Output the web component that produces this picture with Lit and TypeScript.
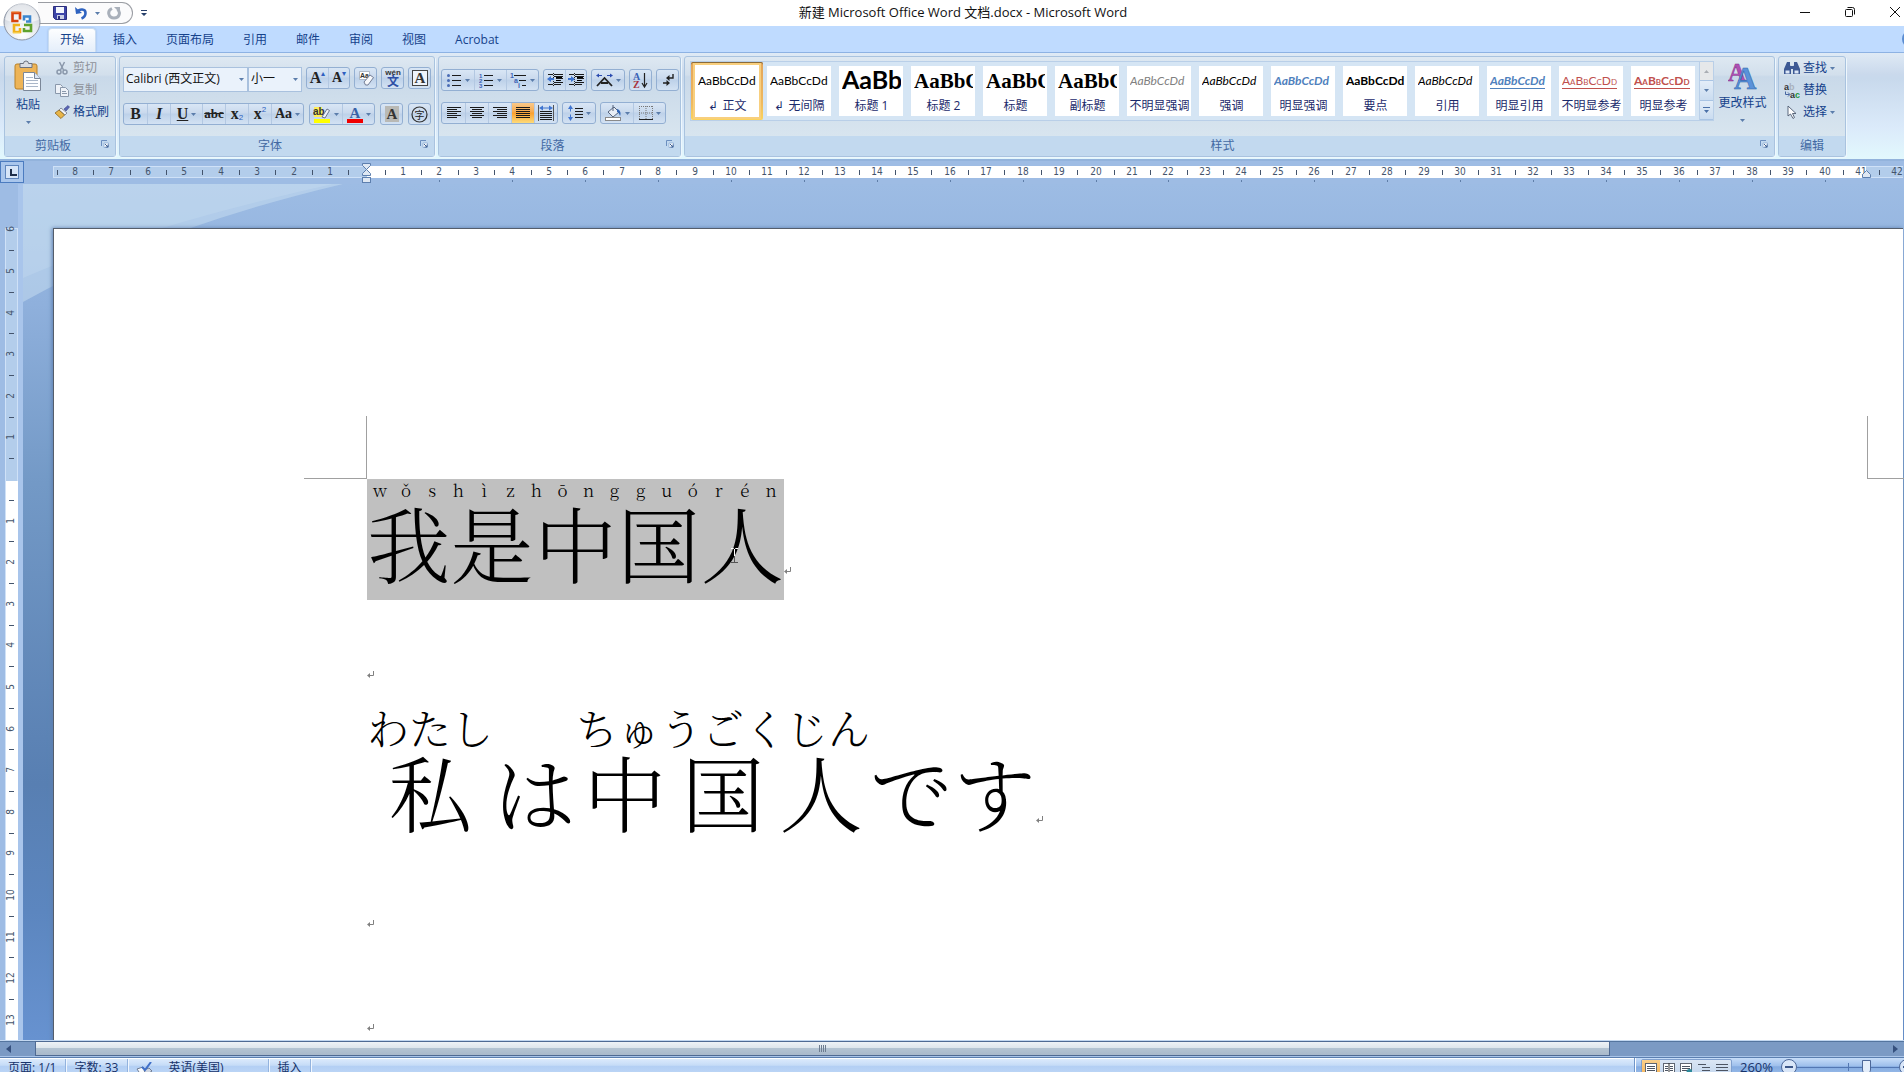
import { LitElement, html, svg, css, nothing, TemplateResult } from "lit";
import { customElement, state } from "lit/decorators.js";

type Glyph = TemplateResult<2>;

const icon = (w: number, h: number, body: Glyph) =>
  html`<svg class="ico" width=${w} height=${h} viewBox="0 0 ${w} ${h}" aria-hidden="true">${body}</svg>`;

const arrow = () => icon(5, 3, svg`<path d="M0 0h5L2.500 3z" fill="#5b7dab"/>`);

const rows = (list: number[][], color = "#1a1a1a"): Glyph =>
  svg`${list.map(([x, y, w]) => svg`<rect x=${x} y=${y} width=${w} height="1" fill=${color}/>`)}`;

const orb = () => icon(40, 40, svg`
  <defs>
    <radialGradient id="o" cx=".5" cy=".85" r=".9"><stop offset="0" stop-color="#fff"/><stop offset=".5" stop-color="#e4e8ee"/><stop offset="1" stop-color="#b7bec9"/></radialGradient>
  </defs>
  <circle cx="20" cy="20" r="18" fill="url(#o)" stroke="#8c95a5"/>
  <path d="M3.500 18a16.500 16.500 0 0 1 33 0c-10 4-23 4-33 0z" fill="#fff" opacity=".55"/>
  <g fill="none" stroke-width="2.600">
    <path d="M18 17.500v-6.500h-7.500v8h6" stroke="#d8430f"/>
    <path d="M22 18.500v-4h6v5h-4" stroke="#3b86cf"/>
    <path d="M18 23h-6v7h6v-4" stroke="#f0b21c"/>
    <path d="M22 23h7v6h-7v-3" stroke="#5fa22c"/>
  </g>
  <path d="M9.500 10h8" stroke="#f58a3a"/><path d="M11 31h7" stroke="#fbe27a"/>`);

const save = () => icon(14, 14, svg`<path d="M.5.5h13v13h-11l-2-2z" fill="#3d45a8" stroke="#2c2f7d"/><path d="M3 1h8v6H3z" fill="#f4f7fd"/><path d="M4 9h7v4H4z" fill="#c9cfe4"/><path d="M5 10h2v3H5z" fill="#2c2f7d"/>`);
const undo = () => icon(14, 14, svg`<path d="M1 1l1 7 6-1z" fill="#2f63c0"/><path d="M3 6C5.500 2.500 11.500 2.500 11.500 7c0 2.500-1.500 4.500-4 5.500" fill="none" stroke="#2f63c0" stroke-width="2.600"/>`);
const redo = () => icon(14, 14, svg`<path d="M5 2.500C-.5 5 1.500 12 7 12s7-6 3.500-8.500" fill="none" stroke="#a9b0ba" stroke-width="3"/><path d="M7 1h6v6z" fill="#a9b0ba"/>`);

const paste = () => icon(28, 32, svg`
  <rect x="1" y="4" width="22" height="25" rx="2" fill="#edb457" stroke="#b98128"/>
  <path d="M6 3.500h3.500a2.500 2.500 0 0 1 5 0H18v4H6z" fill="#d9dde3" stroke="#6b7280"/>
  <path d="M9.500 12.500h11l6 6v12h-17z" fill="#fdfeff" stroke="#7b8798"/>
  <path d="M20.500 12.500v6h6" fill="#dbe6f5" stroke="#7b8798"/>
  ${rows([[12, 17, 7], [12, 20, 12], [12, 23, 12], [12, 26, 12]], "#a9b6c8")}`);
const cut = () => icon(14, 14, svg`<path d="M4.500 1l4 8M9.500 1l-4 8" stroke="#8a98ab" stroke-width="1.500"/><g fill="none" stroke="#8a98ab" stroke-width="1.500"><circle cx="4" cy="11" r="2"/><circle cx="10" cy="11" r="2"/></g>`);
const copy = () => icon(14, 13, svg`<g fill="#eef2f8" stroke="#8a98ab"><path d="M.5.5h5l2 2v7h-7z"/><path d="M5.500 3.500h5l3 3v6h-8z"/></g>${rows([[7, 7, 4], [7, 9, 5]], "#8a98ab")}`);
const brush = () => icon(16, 14, svg`<path d="M10 4l4-3.500 1.500 1.500L12 6z" fill="#5a66b5" stroke="#3a4386" stroke-width=".6"/><path d="M7 3l6 5-2 2-6-5z" fill="#f2f4f8" stroke="#6f7686" stroke-width=".8"/><path d="M5 5l5.500 5L7 13.500 1 8z" fill="#e8b548" stroke="#8a6420" stroke-width=".8"/>`);
const launcher = () => icon(8, 8, svg`<path d="M.5 6V.5H6" fill="none" stroke="#6c8fbf"/><path d="M3 3h4.500v4.500H3z" fill="#fff" stroke="#8ba9d0" stroke-width=".8"/><path d="M4 4l3 3M7 4.500V7H4.500" stroke="#3f6296" fill="none"/>`);

const eraser = () => icon(16, 16, svg`<path d="M1.500 1.500h10v8h-10z" fill="#fff" stroke="#9aa3b3" stroke-width=".7"/><text x="2" y="8" font-size="7" font-weight="700" fill="#333">Aa</text><path d="M6 12l6-7 3.500 2.500L10 15H7.500z" fill="#f6f8fb" stroke="#66718a" stroke-width=".9"/>`);
const wen = () => icon(18, 18, svg`<text x="9" y="6" font-size="8" text-anchor="middle" font-weight="700" fill="#333">wén</text><text x="9" y="17" font-size="12" text-anchor="middle" font-weight="700" fill="#2e4fa5">文</text>`);
const boxA = () => icon(16, 16, svg`<rect x=".5" y=".5" width="15" height="15" fill="#eef3fa" stroke="#444"/><text class="sf" x="8" y="13" font-size="15" text-anchor="middle" font-weight="700" fill="#333">A</text>`);
const shadeA = () => icon(14, 16, svg`<rect width="14" height="16" fill="#b9b9b5"/><text class="sf" x="7" y="13" font-size="15" text-anchor="middle" font-weight="700" fill="#333">A</text>`);
const ringZi = () => icon(17, 17, svg`<circle cx="8.500" cy="8.500" r="7.500" fill="none" stroke="#333" stroke-width="1.200"/><text x="8.500" y="12.500" font-size="10" text-anchor="middle" fill="#222">字</text>`);
const highlight = () => icon(18, 17, svg`<rect x="1" y="1" width="8" height="10" fill="#ffee55"/><text x="0" y="9" font-size="10" font-weight="700" fill="#333">ab</text><path d="M9 11l5-8 2.500 1.500L12 12z" fill="#eef2f8" stroke="#6a7690"/><rect x="1" y="13" width="16" height="4" fill="#ff0"/>`);
const fontColor = () => icon(16, 17, svg`<text class="sf" x="8" y="12" font-size="15" text-anchor="middle" font-weight="700" fill="#3a62a7">A</text><rect y="13" width="16" height="4" fill="#f00000"/>`);

const bullets = () => icon(15, 15, svg`${rows([[5, 2, 9], [5, 7, 9], [5, 12, 9]])}<g fill="#4a6cb5"><circle cx="1.500" cy="2.500" r="1.500"/><circle cx="1.500" cy="7.500" r="1.500"/><circle cx="1.500" cy="12.500" r="1.500"/></g>`);
const numbers = () => icon(15, 15, svg`${rows([[5, 2, 9], [5, 7, 9], [5, 12, 9]])}<g font-size="6" font-weight="700" fill="#3b62b5"><text y="5">1</text><text y="10">2</text><text y="15">3</text></g>`);
const levels = () => icon(17, 15, svg`${rows([[4, 2, 12], [9, 7, 7], [12, 12, 4]])}<g font-size="7" font-weight="700" fill="#3b62b5"><text y="5">1</text><text x="4" y="10">a</text><text x="8" y="15">i</text></g>`);
const indent = (right: boolean) => icon(16, 14, svg`${rows([[1, 1, 5], [7, 1, 9], [7, 3, 9], [9, 5, 7], [9, 7, 5], [7, 9, 9], [1, 11, 5], [7, 11, 7]])}<path d="M9 4h6v1H9zM9 7h4v1H9z"/><path d="M6.500 0v14" stroke="#222" stroke-dasharray="1 1"/><path d=${right ? "M0 5h3V3l4 3-4 3V7H0z" : "M7 5H4V3L0 6l4 3V7h3z"} fill="#3f74cf"/>`);
const asian = () => icon(17, 15, svg`<path d="M1 13l7.500-8L16 13M5 10h7" stroke="#222" stroke-width="1.800" fill="none"/><path d="M0 2.500l3-2v4zM17 2.500l-3-2v4z" fill="#2b4bb0"/><path d="M2 2.500h4M11 2.500h4" stroke="#2b4bb0"/>`);
const sortAz = () => icon(15, 17, svg`<g class="sf" font-size="10" font-weight="700"><text y="8" fill="#3b62b5">A</text><text y="16" fill="#a8333d">Z</text></g><path d="M11.500 1v13M9 11l2.500 4 2.500-4" fill="none" stroke="#222" stroke-width="1.200"/>`);
const marks = () => icon(12, 14, svg`<path d="M11 1v4H5M1 10h6" fill="none" stroke="#222" stroke-width="1.400"/><path d="M7.500 2v6L4 5zM4.500 7v6L8 10z" fill="#222"/>`);
const align = (kind: string) => {
  const at = (w: number) => (kind === "r" ? 14 - w : kind === "c" ? (14 - w) / 2 : 0);
  return icon(14, 12, rows([14, 10, 14, 10, 14, 10].map((w, i) => [at(kind === "j" ? 14 : w), i * 2, kind === "j" ? 14 : w])));
};
const spread = () => icon(16, 16, svg`${rows([[2, 6, 12], [2, 8, 12], [2, 10, 12], [2, 12, 12], [2, 14, 12]])}<path d="M.5 0v16M15.500 0v16" stroke="#555"/><path d="M1 3l4-2.500v5zM15 3l-4-2.500v5z" fill="#3f74cf"/><path d="M3 3h10" stroke="#3f74cf"/>`);
const lineGap = () => icon(15, 16, svg`${rows([[7, 3, 8], [7, 6, 8], [7, 9, 8], [7, 12, 8]])}<path d="M2.500 0L5 4H0zM2.500 16L5 12H0z" fill="#3f74cf"/><path d="M2.500 3v3.500M2.500 9.500V13" stroke="#3f74cf"/>`);
const bucket = () => icon(17, 16, svg`<path d="M3 7l6-5 5 5-6 5z" fill="#e9eef6" stroke="#55637c"/><path d="M8 0v6" stroke="#55637c"/><path d="M12 4c4 1 4 5 3 7-1-3-2-4-3-4z" fill="#2f63b5"/><rect x=".5" y="12.500" width="15" height="3" fill="#fff" stroke="#8a8a8a"/>`);
const borders = () => icon(14, 14, svg`<path d="M.5 0v13M7 0v13M13.500 0v13M0 .5h14M0 7h14" stroke="#777" stroke-dasharray="1 1"/><path d="M0 13.500h14" stroke="#222"/>`);

const changeStyles = () => icon(30, 28, svg`<g class="sf" font-weight="700"><text x="0" y="19" font-size="25" fill="#b04fb3" stroke="#7d2f86" stroke-width=".4">A</text><text x="6" y="27" font-size="31" fill="#5a92da" stroke="#2c5fa6" stroke-width=".5">A</text></g>`);
const find = () => icon(16, 13, svg`<g fill="#3c5894"><path d="M3 0h3v3l1 3v6H0V7z"/><path d="M10 0h3l3 7v5H9V6l1-3z"/><path d="M6 4h4v3H6z"/></g><path d="M1.500 8.500h4v3h-4zM10.500 8.500h4v3h-4z" fill="#dbe6f6"/>`);
const replace = () => icon(16, 15, svg`<g font-size="9" font-weight="700"><text y="7" fill="#333">a</text><text x="5" y="7" fill="#a9b1bd">b</text><text x="6" y="15" fill="#333">a</text><text x="11" y="15" fill="#22943c">c</text></g><path d="M1.500 8.500v3h4M4 9.500l2 2-2 2" fill="none" stroke="#4664a0"/>`);
const pointer = () => icon(10, 14, svg`<path d="M1 1v10l2.500-2L6 13.500l1.500-1L5.500 8.500H9z" fill="#fff" stroke="#4d5a70" stroke-width=".9"/>`);

const proof = () => icon(17, 13, svg`<path d="M1 7l6-2 3 4-5 4z" fill="#f8fafd" stroke="#6f7c93"/><path d="M8 8l5-2 3 3-6 4z" fill="#cdd5e2" stroke="#6f7c93"/><path d="M6 5l3 3 6-8" fill="none" stroke="#3f6fc8" stroke-width="2"/>`);
const viewIcon = (k: number) => icon(12, 11, svg`
  ${k < 3 ? svg`<rect x=".5" y=".5" width="11" height="10" fill="#fff" stroke="#5f6672"/>` : nothing}
  ${k === 1 ? svg`<path d="M6 0v11" stroke="#333"/>` : nothing}
  ${rows(k === 3 ? [[0, 1, 8], [4, 4, 8], [4, 7, 8], [6, 10, 6]] : k === 4 ? [[0, 1, 12], [0, 4, 12], [0, 7, 12], [0, 10, 12]] : k === 1 ? [[2, 3, 3], [2, 5, 3], [2, 7, 3], [7, 3, 3], [7, 5, 3], [7, 7, 3]] : [[2, 3, 8], [2, 5, 8], [2, 7, 8]], "#4d5563")}
  ${k === 2 ? svg`<circle cx="9.500" cy="9" r="3" fill="#2d8a9b"/>` : nothing}`);

const returnMark = () => html`<svg class="mark" width="8" height="8" viewBox="0 0 8 8" aria-hidden="true"><path d="M6.500 0v4.500H2" fill="none" stroke="#808080"/><path d="M3 2v5L0 4.500z" fill="#808080"/></svg>`;

const UNIT_X = 36.45;
const UNIT_Y = 41.6;

@customElement("office-ruler")
class OfficeRuler extends LitElement {
  static styles = css`
    :host { display: block; overflow: hidden; height: 23px; background: #9ebce4; }
    svg { display: block; }
    text { font: 10px "Liberation Sans Narrow", "DejaVu Sans Condensed", sans-serif; fill: #44546c; text-anchor: middle; }
  `;
  render() {
    const zero = 366.5;
    const marks = Array.from({ length: 51 }, (_, i) => i - 8);
    return html`<svg width="1903" height="23" aria-hidden="true">
      <rect x="53.500" y="5.500" width="1860" height="11" fill="#b3cdeb" stroke="#cfe1f7"/>
      <rect x="367" y="5" width="1499" height="12" fill="#fff"/>
      ${marks.map((n) => {
        const x = Math.round(zero + n * UNIT_X);
        const half = Math.round(zero + (n - 0.5) * UNIT_X);
        return svg`<rect x=${half} y="9" width="1" height="5" fill="#44546c"/>
          ${n ? svg`<text x=${x} y="14">${Math.abs(n)}</text>` : nothing}
          ${n > 0 && n < 41 && n % 2 === 0 ? svg`<rect x=${x} y="19" width="1" height="2" fill="#5f7ea8"/>` : nothing}`;
      })}
      <rect x=".5" y=".5" width="23" height="21" fill="#a9c6ec" stroke="#4c7cc0"/>
      <rect x="5.500" y="4.500" width="13" height="13" fill="#d6e5f8" stroke="#5f86bd"/>
      <path d="M11 8v6h6" fill="none" stroke="#1f2f4b" stroke-width="2"/>
      <g fill="#dfe8f3" stroke="#5d7fae">
        <path d="M362.500 2.500h8v2l-4 4 4 4v2h-8v-2l4-4-4-4z"/>
        <rect x="362.500" y="16.500" width="8" height="5"/>
        <path d="M1862.500 16.500v-3l4-4 4 4v3z"/>
      </g>
    </svg>`;
  }
}

@customElement("office-side-ruler")
class OfficeSideRuler extends LitElement {
  static styles = css`
    :host { display: block; overflow: hidden; width: 23px; background: #9ebce4; }
    svg { display: block; }
    text { font: 10px "Liberation Sans Narrow", "DejaVu Sans Condensed", sans-serif; fill: #44546c; text-anchor: middle; }
  `;
  render() {
    const zero = 295;
    const marks = Array.from({ length: 21 }, (_, i) => i - 6);
    return html`<svg width="23" height="900" aria-hidden="true">
      <rect x="18" width="5" height="900" fill="#a9c5eb"/>
      <rect x="5.500" y="44.500" width="12" height="900" fill="#b3cdeb" stroke="#cfe1f7"/>
      <rect x="6" y="297" width="12" height="700" fill="#fff"/>
      ${marks.map((n) => {
        const y = Math.round(zero + n * UNIT_Y);
        const half = Math.round(zero + (n + 0.5) * UNIT_Y);
        return svg`<rect x="9" y=${half} width="5" height="1" fill="#44546c"/>
          ${n ? svg`<text transform="translate(14 ${y}) rotate(-90)">${Math.abs(n)}</text>` : nothing}`;
      })}
    </svg>`;
  }
}

interface StyleItem { label: string; sample: string; cls: string; mark?: boolean; }

const STYLES: StyleItem[] = [
  { label: "正文", sample: "AaBbCcDd", cls: "", mark: true },
  { label: "无间隔", sample: "AaBbCcDd", cls: "", mark: true },
  { label: "标题 1", sample: "AaBb", cls: "h1" },
  { label: "标题 2", sample: "AaBbC", cls: "h2" },
  { label: "标题", sample: "AaBbC", cls: "h2" },
  { label: "副标题", sample: "AaBbC", cls: "h2" },
  { label: "不明显强调", sample: "AaBbCcDd", cls: "it gray" },
  { label: "强调", sample: "AaBbCcDd", cls: "it" },
  { label: "明显强调", sample: "AaBbCcDd", cls: "it bold blue" },
  { label: "要点", sample: "AaBbCcDd", cls: "bold" },
  { label: "引用", sample: "AaBbCcDd", cls: "it" },
  { label: "明显引用", sample: "AaBbCcDd", cls: "it bold blue under" },
  { label: "不明显参考", sample: "AaBbCcDd", cls: "caps red under" },
  { label: "明显参考", sample: "AaBbCcDd", cls: "caps bold red under" },
];

@customElement("app-root")
class AppRoot extends LitElement {
  @state() private tab = "开始";
  @state() private style_ = "正文";

  static styles = css`
    :host {
      display: flex; flex-direction: column; height: 100vh; overflow: hidden;
      font: 12px/16px "Open Sans", "Noto Sans CJK SC", sans-serif; color: #15428b; background: #fff;
    }
    * { box-sizing: border-box; }
    button, select { font: inherit; color: inherit; background: none; border: 0; padding: 0; margin: 0; }
    .ico { display: block; flex: none; }
    .ico text { font-family: "Liberation Sans", "Noto Sans CJK SC", sans-serif; }
    .ico .sf, .ico .sf text { font-family: "Liberation Serif", serif; }

    .title { display: grid; grid-template-columns: 1fr auto 1fr; height: 26px; flex: none; background: #fff; color: #111; }
    .quick { display: flex; align-items: center; height: 22px; margin: 2px 0 0 38px; }
    .pill { display: flex; align-items: center; gap: 7px; height: 22px; width: 95px; padding: 0 9px 0 15px; border: 1px solid #9a9da3; border-left: 0; border-radius: 0 11px 11px 0; background: #fbfbfc; }
    .pill button { display: flex; }
    .more { margin-left: 8px; }
    .name { margin: 0 0 0 22px; font: 13px/16px "Open Sans", "Noto Sans CJK SC", sans-serif; padding-top: 4px; }
    .win { display: flex; justify-content: flex-end; }
    .win button { width: 45px; display: grid; place-items: center; padding-bottom: 2px; }
    .win button:last-child { width: 32px; padding-left: 13px; }
    .orb { position: absolute; left: 2px; top: 2px; z-index: 3; }

    .tabs { display: flex; gap: 5px; height: 26px; flex: none; padding: 2px 0 0 48px; background: #bfdbff; overflow: hidden; }
    .tabs button { height: 24px; border: 1px solid transparent; border-bottom: 0; padding: 0 11px 1px; }
    .tabs .on { border-color: #c9dcf1; border-radius: 4px 4px 0 0; background: linear-gradient(#fdfeff, #e4eefa); box-shadow: 0 0 2px #8fb0dc; }
    .tabs .help { margin: 2px -16px 0 auto; width: 18px; height: 18px; padding: 0; border: 2px solid #5a8cd0; border-radius: 9px; }

    .ribbon { display: flex; gap: 3px; flex: none; height: 109px; padding: 3px 2px 2px 4px; border-top: 1px solid #8db2e3; border-bottom: 2px solid #93b3dc; background: linear-gradient(#dfeaf5, #cad9ec 20%, #c8d9ec 24%, #dbeafa 70%, #e2f8fd); }
    .group { display: flex; flex-direction: column; border: 1px solid #a9c3df; border-radius: 3px; background: linear-gradient(#dee8f2, #d2dfec 18%, #c9d9e9 20%, #d8e5ef 80%); box-shadow: 1px 1px 0 #eef7fd; }
    .gbody { flex: 1; display: flex; }
    .glabel { display: flex; flex: none; height: 20px; background: #c2d9ef; color: #4369a3; align-items: center; }
    .glabel span { flex: 1; text-align: center; }
    .glabel button { width: 14px; align-self: flex-start; padding-top: 4px; }
    .clip { width: 112px; }
    .font { width: 316px; }
    .para { width: 243px; }
    .edit { width: 68px; }
    .big { display: flex; flex-direction: column; align-items: center; }
    .clip .big { width: 46px; padding: 3px 0 0; gap: 5px; }
    .clip .big .ico:last-child, .styles .big .ico:last-child { margin-top: 3px; }
    .list { display: flex; flex-direction: column; }
    .list button { display: flex; align-items: center; gap: 3px; height: 22px; padding-left: 3px; }
    .list button:disabled { color: #8d9199; }
    .list .ico:first-child { width: 16px; }

    .stack { padding: 10px 3px 0 3px; flex: 1; display: flex; flex-direction: column; gap: 11px; }
    .font .line { justify-content: space-between; }
    .para .stack { padding: 12px 4px 0 2px; }
    .line { display: flex; gap: 4px; height: 25px; }
    .para .line { height: 22px; }
    .combos { display: flex; }
    .combo { display: grid; align-items: center; height: 25px; }
    .combo > * { grid-area: 1 / 1; }
    .combo select { appearance: none; height: 25px; width: 100%; padding: 0 2px 2px; border: 1px solid #a9c1de; background: #eaf2fb; color: #111; }
    .combo .ico { justify-self: end; margin-right: 4px; pointer-events: none; }
    .combo.face { width: 125px; }
    .combo.size { width: 54px; }
    .set { display: flex; flex: none; height: 22px; border: 1px solid #93afd2; border-radius: 3px; background: linear-gradient(#d9e6f5, #c9d9ed 45%, #bdd1e9 50%, #d3e2f3); }
    .set button { display: flex; align-items: center; justify-content: center; gap: 3px; flex: none; width: 21px; border-left: 1px solid #b3c8e2; color: #222; }
    .set button:first-child { border-left: 0; }
    .set.roomy button { width: 23px; }
    .set .wide, .set.roomy .wide { width: 32px; }
    .set .on { background: linear-gradient(#f9c98a, #f7a94b 45%, #fb9f2d 50%, #fddb7a); }
    .ch { font: bold 16px/20px "Liberation Serif", serif; color: #222; }
    .ch.i { font-style: italic; }
    .ch.u { text-decoration: underline; }
    .ch.s { font-size: 13px; text-decoration: line-through; }
    .ch.m { font-size: 14px; }
    .tiny { font: 8px/8px "Liberation Sans", sans-serif; color: #2e5fc0; align-self: flex-end; padding-bottom: 2px; margin-left: -3px; }
    .tiny.up { align-self: flex-start; padding-top: 2px; }

    .styles .gbody { padding: 4px 3px 0 5px; }
    .gallery { display: flex; height: 60px; border: 1px solid #b9cfe8; background: #d5e5f4; }
    .cards { display: flex; }
    .card { width: 72px; height: 58px; padding: 4px; display: flex; flex-direction: column; align-items: center; color: #1b2a6b; }
    .card .face { display: flex; flex-direction: column; width: 64px; height: 50px; padding: 0 2px 0 3px; background: #fff; overflow: hidden; }
    .card.on { padding: 1px; background: linear-gradient(#e3a55b, #efb95f 70%, #fbd45c); box-shadow: inset 0 1px 0 #8a6a3a; border-radius: 2px; }
    .card.on .face { width: 68px; height: 56px; border: 2px solid #f8cf7e; padding: 1px 2px 0 3px; }
    .sample { display: block; height: 31px; font: 12px/30px Lato, sans-serif; color: #000; overflow: hidden; white-space: nowrap; text-align: left; }
    .sample.h1 { font: bold 25px/26px Lato, sans-serif; }
    .sample.h2 { font: bold 21px/30px "Liberation Serif", serif; }
    .sample.it { font-style: italic; }
    .sample.bold { font-weight: 700; }
    .sample.gray { color: #808080; }
    .sample.blue { color: #4f81bd; }
    .sample.red { color: #c0504d; }
    .sample.caps { font-variant: small-caps; }
    .under span { border-bottom: 1px solid currentColor; }
    .cap { display: flex; justify-content: center; gap: 4px; white-space: nowrap; line-height: 17px; margin: 0 -3px; }
    .spin { display: flex; flex-direction: column; width: 14px; border-left: 1px solid #b9cfe8; }
    .spin button { flex: 1; display: grid; place-items: center; border-bottom: 1px solid #a9c4e4; background: linear-gradient(#e3edf8, #cadcf0); }
    .spin button:disabled { background: #e6e8ea; }
    .styles .big { width: 57px; padding-top: 1px; gap: 5px; }
    .edit .list { padding-left: 2px; }

    .work { flex: 1; min-height: 0; display: flex; }
    .desk { position: relative; flex: 1; min-width: 0; overflow: hidden; padding: 44px 1px 0 30px; background: linear-gradient(#9dbce4, #8fb0dc 14%, #7399c6 35%, #587fb2 70%, #5c86bf 85%, #6792d0); }
    .sky { position: absolute; left: 0; top: 0; }
    .page { position: relative; height: 1000px; background: #fff; border: 1px solid #555e6b; border-right: 0; padding: 250px 0 0 313px; box-shadow: -1px 0 4px #5f80b0; }
    .page p { display: flex; align-items: flex-end; margin: 0; height: 104px; padding-bottom: 25px; color: #000; }
    .page p.first { height: 121px; }
    .page p.second { height: 145px; }
    .corner { position: absolute; width: 63px; height: 63px; top: 187px; border: 0 solid #a0a0a0; border-bottom-width: 1px; }
    .corner.l { left: 250px; border-right-width: 1px; }
    .corner.r { left: 1813px; border-left-width: 1px; }
    .mark { flex: none; display: block; }
    .ruby { display: flex; flex-direction: column; font-family: "Noto Serif CJK SC", "Noto Sans CJK SC", serif; font-weight: 300; }
    .ruby.jp { font-family: "Noto Serif CJK JP", "Noto Sans CJK JP", serif; }
    .rt, .rb { display: flex; justify-content: space-around; }
    .rb { font-size: 83px; line-height: 84px; }
    .sel { background: #c0c0c0; height: 121px; margin-bottom: -25px; width: 417px; }
    .sel .rt { height: 20px; font-size: 17px; line-height: 22px; }
    .sel .rt span { width: 26px; text-align: center; }
    .jp { margin-bottom: -25px; height: 144px; }
    .jp .rt { height: 43px; font-size: 42px; line-height: 45px; }
    .jp.plain { padding-top: 43px; }
    .beam { position: absolute; left: 676px; top: 318px; }

    .hscroll { flex: none; display: flex; align-items: center; height: 17px; border-top: 1px solid #c3d8f1; border-bottom: 1px solid #a9c4e8; background: #7b9ac4; padding: 0 6px; box-shadow: inset 0 1px #54759f; }
    .track { flex: 1; display: flex; margin: 0 5px 0 24px; height: 15px; }
    .thumb { width: 85%; display: grid; place-items: center; border: 1px solid #4f6a93; background: linear-gradient(#eef2f6, #dde5ec 45%, #b3c3d2 50%, #a9b9cb); }
    .status { flex: none; display: flex; height: 15px; border-top: 1px solid #5b7fb0; color: #16326a; }
    .bar { flex: 1; display: flex; height: 22px; border-top: 1px solid #fff; background: linear-gradient(#dbeafc, #c6dcf7 30%, #b3cff4 34%, #c4dbf7); }
    .cell { display: flex; align-items: center; height: 18px; padding: 0 9px 0 8px; border-right: 1px solid #93b3de; box-shadow: 1px 0 #f0f7ff; }
    .cell.lang { width: 116px; padding-left: 15px; }
    .cell.proof { border: 0; box-shadow: none; padding: 0 0 0 8px; }
    .tools { display: flex; flex: none; align-items: center; width: 270px; height: 22px; padding-left: 6px; overflow: hidden; border-left: 1px solid #6f95c9; box-shadow: inset 1px 0 #fff; background: linear-gradient(#c7ddf8, #9fc0ec 35%, #84abe0 40%, #a9c8f0); }
    .views { display: flex; flex: none; width: 91px; height: 21px; border: 1px solid #7f9fce; border-radius: 2px; background: linear-gradient(#dbe6f4, #bdd2ec); }
    .views button { flex: 1; display: grid; place-items: center; padding-bottom: 2px; }
    .views .on { background: linear-gradient(#f9cf8c, #f8b04c); }
    .pct { flex: none; width: 49px; text-align: center; font-size: 13px; padding-bottom: 4px; }
    .round { flex: none; width: 16px; height: 16px; border: 1px solid #4c6798; border-radius: 8px; background: #d9e6f8; display: grid; place-items: center; margin-bottom: 4px; }
    .zoom { flex: none; width: 102px; margin: 0 0 4px; height: 16px; appearance: none; background: linear-gradient(#5377b3, #5377b3) center / 100% 1px no-repeat, linear-gradient(#5377b3, #5377b3) center / 1px 8px no-repeat; }
    .zoom::-webkit-slider-thumb { appearance: none; width: 9px; height: 14px; border: 1px solid #4c6798; border-radius: 1px 1px 5px 5px; background: #e3edfa; }
  `;

  private group(cls: string, label: string, body: unknown, launch = true) {
    return html`<section class="group ${cls}" aria-label=${label}>
      <div class="gbody">${body}</div>
      <div class="glabel"><span>${label}</span>${launch ? html`<button aria-label="${label}对话框">${launcher()}</button>` : nothing}</div>
    </section>`;
  }

  private btn(label: string, body: unknown, drop = false, on = false) {
    return html`<button class="${drop ? "wide" : ""} ${on ? "on" : ""}" aria-label=${label}>${body}${drop ? arrow() : nothing}</button>`;
  }

  private fontGroup() {
    return html`<div class="stack">
      <div class="line">
        <div class="combos">
          <label class="combo face"><select aria-label="字体"><option>Calibri (西文正文)</option></select>${arrow()}</label>
          <label class="combo size"><select aria-label="字号"><option>小一</option></select>${arrow()}</label>
        </div>
        <div class="set">${this.btn("增大字体", html`<span class="ch">A</span><span class="tiny up">▴</span>`)}${this.btn("缩小字体", html`<span class="ch m">A</span><span class="tiny up">▾</span>`)}</div>
        <div class="set">${this.btn("清除格式", eraser())}</div>
        <div class="set">${this.btn("拼音指南", wen())}</div>
        <div class="set">${this.btn("字符边框", boxA())}</div>
      </div>
      <div class="line">
        <div class="set roomy">
          ${this.btn("加粗", html`<span class="ch">B</span>`)}
          ${this.btn("倾斜", html`<span class="ch i">I</span>`)}
          ${this.btn("下划线", html`<span class="ch u">U</span>`, true)}
          ${this.btn("删除线", html`<span class="ch s">abc</span>`)}
          ${this.btn("下标", html`<span class="ch">x</span><span class="tiny">2</span>`)}
          ${this.btn("上标", html`<span class="ch">x</span><span class="tiny up">2</span>`)}
          ${this.btn("更改大小写", html`<span class="ch m">Aa</span>`, true)}
        </div>
        <div class="set">${this.btn("突出显示", highlight(), true)}${this.btn("字体颜色", fontColor(), true)}</div>
        <div class="set">${this.btn("字符底纹", shadeA())}</div>
        <div class="set">${this.btn("带圈字符", ringZi())}</div>
      </div>
    </div>`;
  }

  private paraGroup() {
    return html`<div class="stack">
      <div class="line">
        <div class="set">${this.btn("项目符号", bullets(), true)}${this.btn("编号", numbers(), true)}${this.btn("多级列表", levels(), true)}</div>
        <div class="set">${this.btn("减少缩进", indent(false))}${this.btn("增加缩进", indent(true))}</div>
        <div class="set">${this.btn("中文版式", asian(), true)}</div>
        <div class="set">${this.btn("排序", sortAz())}</div>
        <div class="set">${this.btn("编辑标记", marks())}</div>
      </div>
      <div class="line">
        <div class="set roomy">${this.btn("左对齐", align("l"))}${this.btn("居中", align("c"))}${this.btn("右对齐", align("r"))}${this.btn("两端对齐", align("j"), false, true)}${this.btn("分散对齐", spread())}</div>
        <div class="set">${this.btn("行距", lineGap(), true)}</div>
        <div class="set">${this.btn("底纹", bucket(), true)}${this.btn("边框", borders(), true)}</div>
      </div>
    </div>`;
  }

  private stylesGroup() {
    return html`<div class="gallery">
        <div class="cards">${STYLES.map((s) => html`
          <button class="card ${s.label === this.style_ ? "on" : ""}" @click=${() => (this.style_ = s.label)}>
            <span class="face"><span class="sample ${s.cls}"><span>${s.sample}</span></span>
            <span class="cap">${s.mark ? html`<span>↲</span>` : nothing}<span>${s.label}</span></span></span>
          </button>`)}</div>
        <div class="spin">
          <button disabled aria-label="上一行">${icon(5, 3, svg`<path d="M0 3h5L2.500 0z" fill="#a9adb3"/>`)}</button>
          <button aria-label="下一行">${arrow()}</button>
          <button aria-label="其他">${icon(7, 6, svg`<path d="M0 0h7v1H0zM1 3h5L3.500 6z" fill="#4a70a8"/>`)}</button>
        </div>
      </div>
      <button class="big">${changeStyles()}<span>更改样式</span>${arrow()}</button>`;
  }

  render() {
    const tabs = ["开始", "插入", "页面布局", "引用", "邮件", "审阅", "视图", "Acrobat"];
    const chars = (t: string) => Array.from(t).map((c) => html`<span>${c}</span>`);
    return html`
      <button class="orb" aria-label="Office">${orb()}</button>
      <header class="title">
        <div class="quick">
          <div class="pill"><button aria-label="保存">${save()}</button><button aria-label="撤消">${undo()}</button>${arrow()}<button aria-label="恢复">${redo()}</button></div>
          <button class="more" aria-label="自定义">${icon(6, 6, svg`<path d="M0 0h6v1H0zM0 3h6L3 6z" fill="#27406b"/>`)}</button>
        </div>
        <h1 class="name">新建 Microsoft Office Word 文档.docx - Microsoft Word</h1>
        <div class="win">
          <button aria-label="最小化">${icon(10, 10, svg`<path d="M0 5.500h10" stroke="#111"/>`)}</button>
          <button aria-label="还原">${icon(10, 10, svg`<rect x=".5" y="2.500" width="7" height="7" rx="1" fill="none" stroke="#111"/><path d="M2.500 .5h5a2 2 0 0 1 2 2v5" fill="none" stroke="#111"/>`)}</button>
          <button aria-label="关闭">${icon(10, 10, svg`<path d="M0 0l10 10M10 0L0 10" stroke="#111"/>`)}</button>
        </div>
      </header>
      <nav class="tabs">
        ${tabs.map((t) => html`<button class=${t === this.tab ? "on" : ""} @click=${() => (this.tab = t)}>${t}</button>`)}
        <button class="help" aria-label="帮助"></button>
      </nav>
      <div class="ribbon">
        ${this.group("clip", "剪贴板", html`
          <button class="big">${paste()}<span>粘贴</span>${arrow()}</button>
          <div class="list"><button disabled>${cut()}剪切</button><button disabled>${copy()}复制</button><button>${brush()}格式刷</button></div>`)}
        ${this.group("font", "字体", this.fontGroup())}
        ${this.group("para", "段落", this.paraGroup())}
        ${this.group("styles", "样式", this.stylesGroup())}
        ${this.group("edit", "编辑", html`<div class="list"><button>${find()}查找 ${arrow()}</button><button>${replace()}替换</button><button>${pointer()}选择 ${arrow()}</button></div>`, false)}
      </div>
      <office-ruler></office-ruler>
      <div class="work">
        <office-side-ruler></office-side-ruler>
        <main class="desk">
          <svg class="sky" width="400" height="140" aria-hidden="true">
            <path d="M0 0h320Q130 45 0 118z" fill="#c9dff2" opacity=".5"/>
            <path d="M0 0h310Q120 42 0 94z" fill="#d0e3f5" opacity=".25"/>
          </svg>
          <article class="page">
            <i class="corner l"></i><i class="corner r"></i>
            <p class="first">
              <span class="ruby sel"><span class="rt">${chars("wǒshìzhōngguórén")}</span><span class="rb">${chars("我是中国人")}</span></span>${returnMark()}
            </p>
            <p>${returnMark()}</p>
            <p class="second">
              <span class="ruby jp"><span class="rt">わたし</span><span class="rb">私</span></span>
              <span class="ruby jp plain"><span class="rb">は</span></span>
              <span class="ruby jp"><span class="rt">ちゅうごくじん</span><span class="rb">${chars("中国人")}</span></span>
              <span class="ruby jp plain"><span class="rb">です</span></span>${returnMark()}
            </p>
            <p>${returnMark()}</p>
            <p>${returnMark()}</p>
            <svg class="beam" width="9" height="17" viewBox="0 0 9 17" aria-hidden="true"><path d="M1 1.500h2.500l1 1 1-1H8M4.500 2v7" fill="none" stroke="#fff"/><path d="M4.500 9v6M1 15.500h7" fill="none" stroke="#555"/></svg>
          </article>
        </main>
      </div>
      <div class="hscroll">
        ${icon(5, 8, svg`<path d="M5 0v8L0 4z" fill="#35507e"/>`)}
        <div class="track"><div class="thumb">${icon(8, 7, svg`<path d="M.5 0v7M2.500 0v7M4.500 0v7M6.500 0v7" stroke="#6d7c90"/>`)}</div></div>
        ${icon(5, 8, svg`<path d="M0 0v8l5-4z" fill="#35507e"/>`)}
      </div>
      <footer class="status">
        <div class="bar">
          <span class="cell">页面: 1/1</span><span class="cell">字数: 33</span>
          <span class="cell proof">${proof()}</span><span class="cell lang">英语(美国)</span><span class="cell">插入</span>
        </div>
        <div class="tools">
          <div class="views">${["页面视图", "阅读版式", "Web 版式", "大纲视图", "普通视图"].map((v, i) => html`<button class=${i ? "" : "on"} aria-label=${v}>${viewIcon(i)}</button>`)}</div>
          <span class="pct">260%</span>
          <button class="round" aria-label="缩小">${icon(8, 2, svg`<rect width="8" height="2" fill="#3c5688"/>`)}</button>
          <input class="zoom" type="range" min="10" max="500" value="350" aria-label="显示比例">
          <button class="round" aria-label="放大">${icon(8, 8, svg`<path d="M0 3h3V0h2v3h3v2H5v3H3V5H0z" fill="#3c5688"/>`)}</button>
        </div>
      </footer>`;
  }
}
